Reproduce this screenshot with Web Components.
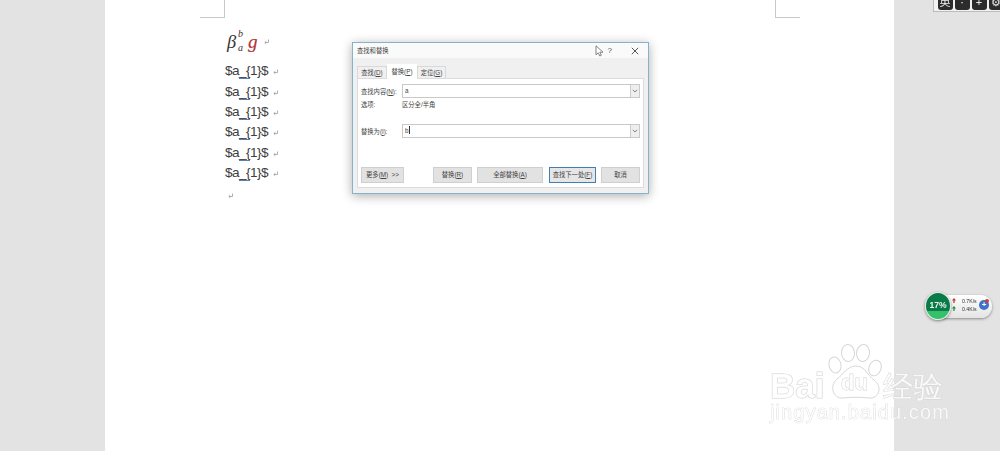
<!DOCTYPE html>
<html lang="zh"><head><meta charset="utf-8">
<style>
html,body{margin:0;height:451px;overflow:hidden;background:#e3e3e3}
body{font-family:"Liberation Sans",sans-serif}
</style></head><body>
<word-app>
  <doc-line slot="doc" kind="formula"></doc-line>
  <doc-line slot="doc">$a<u>_{</u>1}$</doc-line>
  <doc-line slot="doc">$a<u>_{</u>1}$</doc-line>
  <doc-line slot="doc">$a<u>_{</u>1}$</doc-line>
  <doc-line slot="doc">$a<u>_{</u>1}$</doc-line>
  <doc-line slot="doc">$a<u>_{</u>1}$</doc-line>
  <doc-line slot="doc">$a<u>_{</u>1}$</doc-line>
  <doc-line slot="doc" kind="empty"></doc-line>
  <find-dialog slot="over"></find-dialog>
  <ime-bar slot="over"></ime-bar>
  <net-widget slot="over"></net-widget>
  <baidu-mark slot="over"></baidu-mark>
</word-app>
<script>
const def=(n,html)=>customElements.define(n,class extends HTMLElement{
  constructor(){super();this.attachShadow({mode:'open'}).innerHTML=typeof html==='function'?html(this):html;}
});
const CJK='"Liberation Sans","Noto Sans CJK SC",sans-serif';
def('word-app',`<style>
:host{display:block;width:1000px;height:451px;position:relative;overflow:hidden;filter:blur(.35px)}
.page{margin-left:105px;width:789px;height:451px;background:#fff;box-sizing:border-box;padding:29px 0 0 120px;position:relative}
.c{position:absolute;top:0;width:24px;height:17px;border-bottom:1px solid #c8c8c8}
.l{left:95px;border-right:1px solid #c8c8c8}
.r{left:670px;border-left:1px solid #c8c8c8}
.doc{display:flex;flex-direction:column}
</style><div class="page"><i class="c l"></i><i class="c r"></i><div class="doc"><slot name="doc"></slot></div></div><slot name="over"></slot>`);
const ret=(s='')=>`<svg class="ret" style="${s}" width="5" height="6" viewBox="0 0 5 6"><path d="M4.5 .5V3.5H1M2.3 2.2L.8 3.5L2.3 4.8" fill="none" stroke="#9a9a9a" stroke-width=".8"/></svg>`;
def('doc-line',h=>{
 const k=h.getAttribute('kind');
 const st=`<style>:host{display:flex;align-items:center;height:20.4px;font:13.6px "Liberation Sans",sans-serif;letter-spacing:-.55px;color:#404040;white-space:nowrap}
 .ret{margin:2px 0 0 5px}
 ::slotted(u){text-decoration:none;border-bottom:1.3px solid #5b7fb5;display:inline-block;line-height:12px;height:13px}
 :host([kind=formula]){height:24px;margin-bottom:8px;padding-left:2px;font:italic 18.5px "Liberation Serif",serif;letter-spacing:0;color:#333}
 :host([kind=empty]){height:22px}
 .b{position:relative;width:17px;height:24px;display:inline-block}
 .b span{position:absolute;line-height:1}
 .g{color:#b0363a;font-size:19px;font-weight:400;margin-left:4px;line-height:1;-webkit-text-stroke:.2px #b0363a}
 </style>`;
 if(k==='formula')return st+`<span class="b"><span style="left:0;top:4px">β</span><span style="left:11px;top:0;font-size:10px">b</span><span style="left:11px;top:14px;font-size:10px">a</span></span><span class="g">g</span>`+ret('margin-left:6px');
 if(k==='empty')return st+ret('margin:4px 0 0 3px');
 return st+`<span><slot></slot></span>`+ret();
});
def('find-tab',`<style>:host{display:block;box-sizing:border-box;height:13px;text-align:center;font:6.3px/11px ${CJK};color:#444;background:#f0f0f0;border:1px solid #d9d9d9;border-bottom:0;margin-top:2px;white-space:nowrap}
:host([on]){background:#fff;height:15px;margin-top:0;border-color:#fff;line-height:13px;position:relative;z-index:1}</style><slot></slot>`);
def('find-combo',`<style>:host{display:flex;flex:1;height:12px;border:1px solid #c9c9c9;background:#fff;font:6.3px/12px ${CJK};color:#444}
.t{flex:1;padding-left:2px}.a{width:8px;background:#eee;border-left:1px solid #ccc;display:flex;align-items:center;justify-content:center}
</style><div class="t"><slot></slot></div><div class="a"><svg width="6" height="4" viewBox="0 0 6 4"><path d="M.8 .8L3 3L5.2 .8" fill="none" stroke="#666" stroke-width=".8"/></svg></div>`);
def('find-btn',`<style>:host{display:flex;align-items:center;justify-content:center;box-sizing:border-box;height:16px;background:#e2e2e2;border:1px solid #cfcfcf;font:6.3px/1 ${CJK};color:#444;white-space:nowrap}
:host([primary]){border:1.5px solid #3f7fb3;background:#e6e6e6}</style><slot></slot>`);
def('find-dialog',`<style>
:host{position:absolute;left:352px;top:42px;width:297px;height:152px;box-sizing:border-box;border:1px solid #86b2cc;background:#f0f0f0;box-shadow:0 2px 10px rgba(0,0,0,.32);display:flex;flex-direction:column;font:6.3px ${CJK};color:#444}
u{text-decoration-thickness:.5px}
.title{height:15px;background:#fafafa;display:flex;align-items:center;padding:0 9px 0 4px;flex:none}
.title b{font-weight:400;flex:1;font-size:6.3px}
.q{font-size:8px;margin-right:19px;color:#555}
.tabs{display:flex;margin:6px 0 0 4px;flex:none;height:15px}
.panel{margin:-1px 4px 5px 4px;background:#fff;border:1px solid #dcdcdc;flex:1;box-sizing:border-box;padding:5px 3px 0 3px;display:flex;flex-direction:column}
.row{display:flex;align-items:center;height:14px}
.lab{width:41px;flex:none;white-space:nowrap}
.opt{margin-top:2px;height:9px;line-height:9px;display:flex}
.rep{margin-top:15px}
.cur{display:inline-block;width:1px;height:8px;background:#333;vertical-align:-1px}
.btns{display:flex;margin-top:auto;margin-bottom:4px;height:16px;align-items:center}
.cursor{position:absolute;left:242px;top:2px}
</style>
<div class="title"><b>查找和替换</b><span class="q">?</span><svg width="8" height="8" viewBox="0 0 8 8"><path d="M.8 .8L7.2 7.2M7.2 .8L.8 7.2" stroke="#444" stroke-width=".9"/></svg></div>
<svg class="cursor" width="9" height="12" viewBox="0 0 9 12"><path d="M1 .8V9.8L3.2 7.8L4.8 11L6.3 10.3L4.8 7.2H8Z" fill="#fff" stroke="#666" stroke-width=".8"/></svg>
<div class="tabs"><find-tab style="width:30px">查找(<u>D</u>)</find-tab><find-tab on style="width:30px">替换(<u>P</u>)</find-tab><find-tab style="width:29px">定位(<u>G</u>)</find-tab></div>
<div class="panel">
<div class="row"><span class="lab">查找内容(<u>N</u>):</span><find-combo>a</find-combo></div>
<div class="opt"><span class="lab">选项:</span><span>区分全/半角</span></div>
<div class="row rep"><span class="lab">替换为(<u>I</u>):</span><find-combo>b<span class="cur"></span></find-combo></div>
<div class="btns"><find-btn style="width:43px">更多(<u>M</u>) &nbsp;&gt;&gt;</find-btn><find-btn style="width:39px;margin-left:29px">替换(<u>R</u>)</find-btn><find-btn style="width:66px;margin-left:5px">全部替换(<u>A</u>)</find-btn><find-btn primary style="width:47px;margin-left:6px">查找下一处(<u>F</u>)</find-btn><find-btn style="width:39px;margin-left:5px">取消</find-btn></div>
</div>`);
def('ime-bar',`<style>:host{position:absolute;left:933px;top:-6px;width:70px;height:18px;box-sizing:border-box;display:flex;gap:2px;background:#f2f2f2;border:1px solid #bbb;padding:0 0 0 3.5px;overflow:hidden;font:11px/15px ${CJK};color:#eee}
span{width:15px;height:15px;background:#2c2c2c;border-radius:3px;text-align:center;flex:none}
</style><span>英</span><span>·</span><span>+</span><span>⚙</span>`);
const arrow=c=>`<svg width="4" height="5" viewBox="0 0 5 6" style="display:block;margin-top:1.5px"><path d="M2.5 0L5 3H3.3V6H1.7V3H0Z" fill="${c}"/></svg>`;
def('net-widget',`<style>:host{position:absolute;left:925px;top:292px;width:67px;height:28px;display:block}
.pill{position:absolute;left:9px;top:3px;width:58px;height:23px;border-radius:12px;background:linear-gradient(#fff,#e4e4e4);box-shadow:0 1px 3px rgba(0,0,0,.4);font:5.2px/8px "Liberation Sans",sans-serif;color:#333}
.rows{position:absolute;left:18px;top:1.5px;display:grid;grid-template-columns:10px auto}
.ic{position:absolute;left:45px;top:5px;width:10px;height:10px;border-radius:50%;background:#3d74c9;color:#fff;font:700 8px/10px "Liberation Sans",sans-serif;text-align:center}
.dot{position:absolute;left:51px;top:4px;width:4px;height:4px;border-radius:50%;background:#d23c3c}
.ball{position:absolute;left:0;top:0;width:26px;height:28px;box-sizing:border-box;border-radius:50%;border:1.5px solid #dfe8e2;background:linear-gradient(#0a7a48 0 70%,#35c06c 70%);box-shadow:0 1px 3px rgba(0,0,0,.45);color:#e9f5ee;font:700 8.6px/24px "Liberation Sans",sans-serif;text-align:center}
</style><div class="pill"><div class="rows">${arrow('#c0392b')}<span>0.7K/s</span>${arrow('#2a8a4a')}<span>0.4K/s</span></div><div class="ic">+</div><div class="dot"></div></div><div class="ball">17%</div>`);
def('baidu-mark',`<style>:host{position:absolute;left:765px;top:343px;width:190px;height:85px;display:block;pointer-events:none}
.t{position:absolute;white-space:nowrap;color:rgba(255,255,255,.8);-webkit-text-stroke:.8px #d2d2d2;paint-order:stroke fill;font-family:"Liberation Sans",sans-serif}
svg{position:absolute;left:0;top:0}
</style>
<svg width="190" height="85" viewBox="0 0 190 85" fill="rgba(255,255,255,.8)" stroke="#d6d6d6" stroke-width="1">
<ellipse cx="70" cy="22" rx="6" ry="8" transform="rotate(-15 70 22)"/>
<ellipse cx="83" cy="10" rx="6.5" ry="8.5" transform="rotate(-5 83 10)"/>
<ellipse cx="98" cy="10" rx="6.5" ry="8.5" transform="rotate(8 98 10)"/>
<ellipse cx="110" cy="25" rx="6" ry="8" transform="rotate(22 110 25)"/>
<path d="M72 36C78 32 82 23 91 23C100 23 102 32 109 37C118 44 114 56 104 55C96 54 86 54 78 55C68 56 64 43 72 36Z"/>
</svg>
<span class="t" style="left:5px;top:29px;line-height:28px;font-size:35px;font-weight:700;-webkit-text-stroke:1px #d2d2d2">Bai</span>
<span class="t" style="left:76px;top:27px;font-size:22px;font-weight:700">du</span>
<span class="t" style="left:118px;top:29px;font-size:30px;line-height:1;font-family:${CJK};font-weight:700">经验</span>
<span class="t" style="left:5px;top:59px;line-height:20px;font-size:20px;letter-spacing:1.1px;-webkit-text-stroke:.6px #d2d2d2">jingyan.baidu.com</span>`);
</script>
</body></html>
